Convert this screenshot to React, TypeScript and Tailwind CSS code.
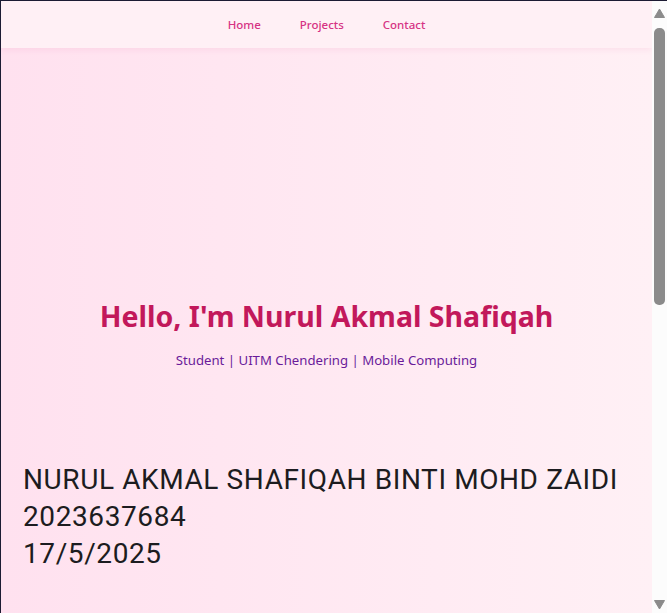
function Scrollbar() {
  return (
    <aside className="w-[15px] shrink-0 bg-[#fcfcfc] flex flex-col items-center pt-[7px] pb-[3px]">
      <svg width="11" height="10" viewBox="0 0 11 10" className="shrink-0">
        <path d="M5.5 1 L10.5 9.5 L0.5 9.5 Z" fill="#8b8b8b" strokeLinejoin="round" stroke="#8b8b8b" strokeWidth="1" />
      </svg>
      <div className="mt-[10px] h-[277px] w-[11px] rounded-[5px] bg-[#8b8b8b]" />
      <div className="flex-1" />
      <svg width="11" height="10" viewBox="0 0 11 10" className="shrink-0">
        <path d="M0.5 0.5 L10.5 0.5 L5.5 9 Z" fill="#8b8b8b" strokeLinejoin="round" stroke="#8b8b8b" strokeWidth="1" />
      </svg>
    </aside>
  );
}

export default function App() {
  return (
    <div className="h-[613px] border-t border-l border-[#1c1b33] bg-white flex overflow-hidden">
      <main className="flex-1 h-[612px] overflow-hidden bg-gradient-to-r from-[#ffe1ef] to-[#fff0f5]">
        <nav className="h-[47px] bg-[#fff0f5] shadow-[0_2px_6px_rgba(214,51,132,0.08)] flex items-center justify-center gap-[39px] font-['Noto_Sans',sans-serif] text-[11.5px] font-medium text-[#d63384]">
          <a href="#">Home</a>
          <a href="#">Projects</a>
          <a href="#">Contact</a>
        </nav>

        <section className="pt-[251px] pb-[91px] text-center font-['Noto_Sans',sans-serif]">
          <h1 className="text-[28.5px] font-bold leading-tight text-[#c2185b]">Hello, I'm Nurul Akmal Shafiqah</h1>
          <p className="mt-[16px] text-[13.2px] text-[#6a1b9a]">Student | UITM Chendering | Mobile Computing</p>
        </section>

        <div className="px-[22px] font-['Roboto',sans-serif] text-[28px] leading-[37px] tracking-[0.6px] text-[#1c1c20]">
          <p>NURUL AKMAL SHAFIQAH BINTI MOHD ZAIDI</p>
          <p>2023637684</p>
          <p>17/5/2025</p>
        </div>
      </main>
      <Scrollbar />
    </div>
  );
}
